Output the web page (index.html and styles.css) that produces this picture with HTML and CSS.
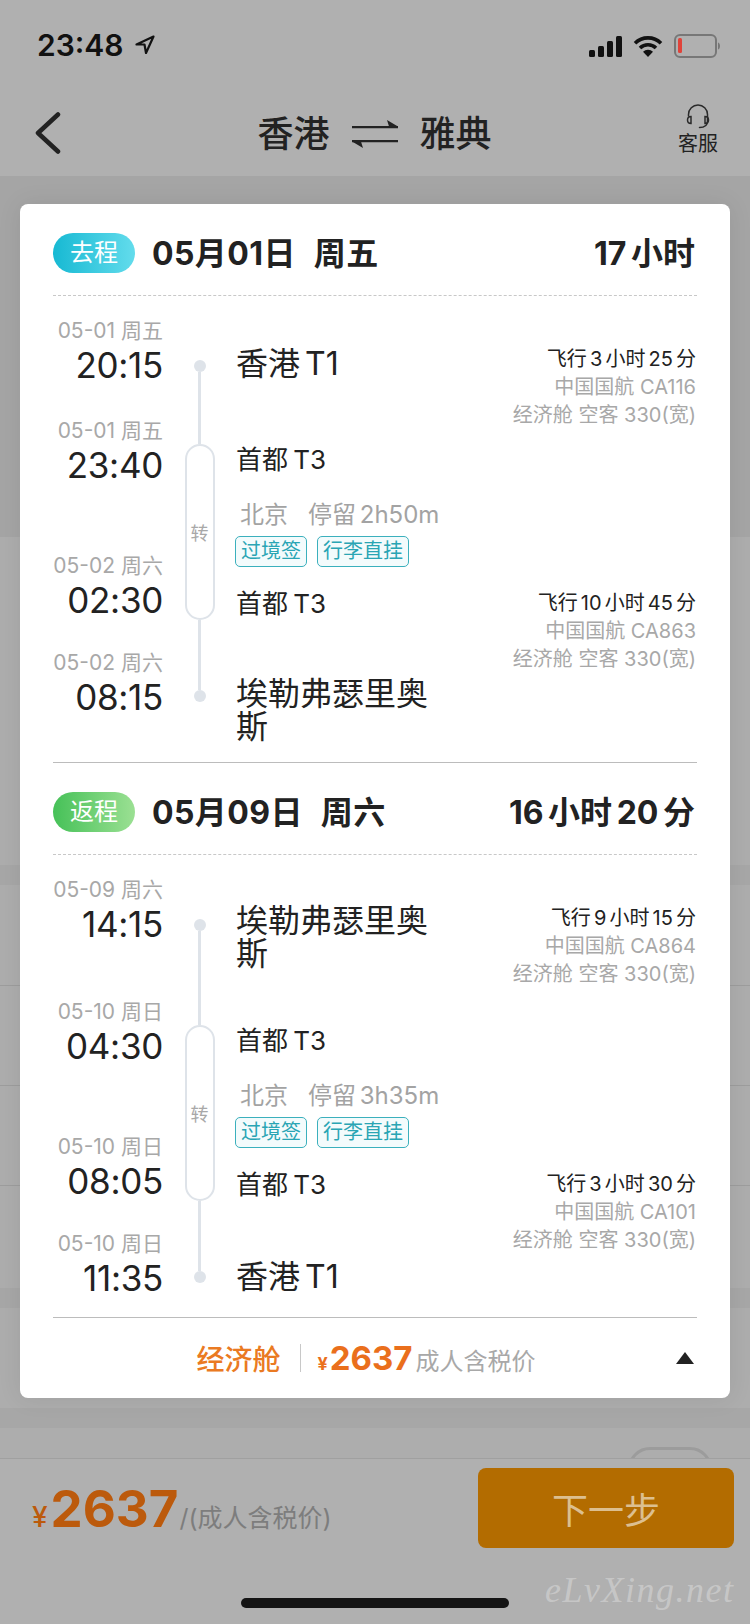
FILE: index.html
```html
<!DOCTYPE html>
<html>
<head>
    <meta charset="UTF-8">
    <title>香港 - 雅典</title>
    <link rel="stylesheet" href="styles.css">
</head>
<body>
    <header class="top-bar">
        <div class="status-bar">
            <div class="status-time">
                23:48
                <svg width="20" height="20" viewBox="0 0 20 20"><path d="M18.5 1.5 1.5 9.5h8l1.500 8.500z" fill="none" stroke="#111" stroke-width="2.200" stroke-linejoin="round"/></svg>
            </div>
            <div class="status-icons">
                <svg width="33" height="21" viewBox="0 0 33 21"><g fill="#111"><rect x="0" y="14" width="6" height="7" rx="1.5"/><rect x="9" y="10" width="6" height="11" rx="1.5"/><rect x="18" y="5" width="6" height="16" rx="1.5"/><rect x="27" y="0" width="6" height="21" rx="1.5"/></g></svg>
                <svg width="30" height="22" viewBox="0 0 30 22"><g fill="none" stroke="#111" stroke-width="3.6"><path d="M2 8.200a18.600 18.600 0 0 1 26 0"/><path d="M7 13a11.500 11.500 0 0 1 16 0"/></g><path d="M15 22l-5-5.200a7 7 0 0 1 10 0z" fill="#111"/></svg>
                <svg class="battery" width="46" height="24" viewBox="0 0 46 24"><rect x="1" y="1" width="41" height="22" rx="5" fill="none" stroke="#777" stroke-width="2"/><rect x="4" y="4" width="4" height="15" rx="1.500" fill="#e0433a"/><path d="M44 8.500c1.500.5 2 2 2 3.500s-.5 3-2 3.500z" fill="#777"/></svg>
            </div>
        </div>
        <nav class="nav-bar">
            <svg class="back-icon" width="26" height="42" viewBox="0 0 26 42"><path d="M23 2.500 3 21l20 18.500" fill="none" stroke="#222" stroke-width="4.500" stroke-linecap="round" stroke-linejoin="round"/></svg>
            <div class="nav-title">
                <span>香港</span>
                <svg width="46" height="28" viewBox="0 0 46 28"><g fill="#222"><path d="M0 6h46v2.200H0z"/><path d="M46 6.500 35 0l2 6.500z"/><path d="M0 20h46v2.200H0z"/><path d="M0 21.500 11 28l-2-6.500z"/></g></svg>
                <span>雅典</span>
            </div>
            <div class="nav-service">
                <svg width="26" height="27" viewBox="0 0 26 27"><g fill="none" stroke="#2a2a2a" stroke-width="1.500" stroke-linecap="round"><path d="M3.500 12V10.500a9.500 9.500 0 0 1 19 0V17c0 4-3 6.500-8 6.500"/><path d="M6 12.500c-2.500 0-3.500 1.500-3.500 3.500s1 3.500 3.500 3.500z"/><path d="M20 12.500c2.500 0 3.500 1.500 3.500 3.500s-1 3.500-3.500 3.500z"/></g></svg>
                <span>客服</span>
            </div>
        </nav>
    </header>

    <main class="content">
        <!-- page behind the sheet -->
        <div class="backdrop">
            <div class="bg-block bg-hero"></div>
            <div class="bg-block bg-first"></div>
            <div class="bg-gap"></div>
            <div class="bg-block bg-list">
                <div class="bg-row"></div>
                <div class="bg-row"></div>
                <div class="bg-row"></div>
            </div>
            <div class="bg-gap"></div>
            <div class="bg-block bg-short"></div>
            <div class="bg-gap"></div>
            <div class="bg-block bg-switch-row"><div class="bg-switch"></div></div>
        </div>

        <section class="sheet">
            <div class="leg">
                <div class="leg-head">
                    <span class="leg-badge badge-out">去程</span>
                    <span class="leg-date">05月01日&nbsp;&nbsp;周五</span>
                    <span class="leg-total">17 小时</span>
                </div>
                <div class="route route-short">
                    <div class="stop-time">
                        <div class="date-label">05-01 周五</div>
                        <div class="clock">20:15</div>
                    </div>
                    <div class="rail rail-start"><i class="rail-dot"></i><i class="rail-line"></i></div>
                    <div class="stop-name stop-name-single">香港 T1</div>
                    <div class="flight-info">
                        <div class="flight-time">飞行 3 小时 25 分</div>
                        <div>中国国航 CA116</div>
                        <div>经济舱 空客 330(宽)</div>
                    </div>

                    <div class="mid-times">
                        <div class="stop-time">
                            <div class="date-label">05-01 周五</div>
                            <div class="clock">23:40</div>
                        </div>
                        <div class="stop-time">
                            <div class="date-label">05-02 周六</div>
                            <div class="clock">02:30</div>
                        </div>
                    </div>
                    <div class="rail rail-mid">
                        <i class="rail-line stub-top"></i>
                        <div class="transfer-pill">转</div>
                        <i class="rail-line stub-bottom"></i>
                    </div>
                    <div class="mid-stops">
                        <div class="terminal">首都 T3</div>
                        <div class="layover"><span>北京</span><span>停留 2h50m</span></div>
                        <div class="tags"><span class="tag">过境签</span><span class="tag">行李直挂</span></div>
                        <div class="terminal terminal-next">首都 T3</div>
                    </div>
                    <div class="flight-info flight-info-next">
                        <div class="flight-time">飞行 10 小时 45 分</div>
                        <div>中国国航 CA863</div>
                        <div>经济舱 空客 330(宽)</div>
                    </div>

                    <div class="stop-time">
                        <div class="date-label">05-02 周六</div>
                        <div class="clock">08:15</div>
                    </div>
                    <div class="rail rail-end"><i class="rail-line stub-end"></i><i class="rail-dot"></i></div>
                    <div class="stop-name">埃勒弗瑟里奥斯</div>
                </div>
            </div>

            <div class="leg">
                <div class="leg-head">
                    <span class="leg-badge badge-back">返程</span>
                    <span class="leg-date">05月09日&nbsp;&nbsp;周六</span>
                    <span class="leg-total">16 小时 20 分</span>
                </div>
                <div class="route route-tall">
                    <div class="stop-time">
                        <div class="date-label">05-09 周六</div>
                        <div class="clock">14:15</div>
                    </div>
                    <div class="rail rail-start"><i class="rail-dot"></i><i class="rail-line"></i></div>
                    <div class="stop-name">埃勒弗瑟里奥斯</div>
                    <div class="flight-info">
                        <div class="flight-time">飞行 9 小时 15 分</div>
                        <div>中国国航 CA864</div>
                        <div>经济舱 空客 330(宽)</div>
                    </div>

                    <div class="mid-times">
                        <div class="stop-time">
                            <div class="date-label">05-10 周日</div>
                            <div class="clock">04:30</div>
                        </div>
                        <div class="stop-time">
                            <div class="date-label">05-10 周日</div>
                            <div class="clock">08:05</div>
                        </div>
                    </div>
                    <div class="rail rail-mid">
                        <i class="rail-line stub-top"></i>
                        <div class="transfer-pill">转</div>
                        <i class="rail-line stub-bottom"></i>
                    </div>
                    <div class="mid-stops">
                        <div class="terminal">首都 T3</div>
                        <div class="layover"><span>北京</span><span>停留 3h35m</span></div>
                        <div class="tags"><span class="tag">过境签</span><span class="tag">行李直挂</span></div>
                        <div class="terminal terminal-next">首都 T3</div>
                    </div>
                    <div class="flight-info flight-info-next">
                        <div class="flight-time">飞行 3 小时 30 分</div>
                        <div>中国国航 CA101</div>
                        <div>经济舱 空客 330(宽)</div>
                    </div>

                    <div class="stop-time">
                        <div class="date-label">05-10 周日</div>
                        <div class="clock">11:35</div>
                    </div>
                    <div class="rail rail-end"><i class="rail-line stub-end"></i><i class="rail-dot"></i></div>
                    <div class="stop-name stop-name-single">香港 T1</div>
                </div>
            </div>

            <div class="sheet-foot">
                <div class="foot-price">
                    <span class="foot-cabin">经济舱</span>
                    <i class="foot-sep"></i>
                    <span class="foot-yen">¥</span><span class="foot-amount">2637</span><span class="foot-note">成人含税价</span>
                </div>
                <i class="foot-arrow"></i>
            </div>
        </section>
    </main>

    <footer class="bottom-bar">
        <div class="buy-row">
            <div class="total">
                <span class="total-yen">¥</span><span class="total-amount">2637</span><span class="total-note">/(成人含税价)</span>
            </div>
            <button class="next-btn">下一步</button>
        </div>
        <div class="home-bar"></div>
        <div class="watermark">eLvXing.net</div>
    </footer>
</body>
</html>
```

FILE: styles.css
```css
/* Base styles */
* {
    box-sizing: border-box;
}

body {
    margin: 0;
    width: 750px;
    height: 1624px;
    overflow: hidden;
    display: flex;
    flex-direction: column;
    background: #b0b0b0;
    font-family: Inter, "Noto Sans CJK SC", sans-serif;
    color: #222;
}

i {
    display: block;
}

/* Status bar and nav */
.top-bar {
    height: 176px;
    background: #b0b0b0;
}

.status-bar {
    height: 90px;
    padding: 30px 30px 0 37px;
    display: flex;
    justify-content: space-between;
    align-items: flex-start;
}

.status-time {
    display: flex;
    align-items: center;
    gap: 11px;
    font-size: 30px;
    font-weight: 600;
    line-height: 30px;
    color: #111;
}

.status-icons {
    display: flex;
    align-items: center;
    gap: 11px;
    margin-top: 4px;
}

.nav-bar {
    height: 86px;
    padding: 0 32px 0 35px;
    display: flex;
    align-items: flex-start;
    position: relative;
}

.back-icon {
    margin-top: 22px;
}

.nav-title {
    flex: 1;
    display: flex;
    justify-content: center;
    align-items: center;
    gap: 22px;
    margin-top: 19px;
    padding-left: 10px;
    font-size: 36px;
    font-weight: 500;
    line-height: 50px;
}

.nav-service {
    display: flex;
    flex-direction: column;
    align-items: center;
    margin-top: 14px;
    font-size: 20px;
    line-height: 26px;
}

/* Page behind the sheet */
.content {
    height: 1282px;
    position: relative;
}

.bg-block {
    background: #adadad;
}

.bg-gap {
    height: 20px;
    background: #a7a7a7;
}

.bg-hero {
    height: 361px;
    background: #a5a5a5;
}

.bg-first {
    height: 328px;
}

.bg-list {
    height: 403px;
    padding-top: 100px;
}

.bg-row {
    height: 100px;
    border-top: 1px solid #9d9d9d;
}

.bg-short {
    height: 100px;
}

.bg-switch-row {
    height: 30px;
    padding: 19px 38px 0 0;
    display: flex;
    justify-content: flex-end;
    overflow: hidden;
}

.bg-switch {
    width: 84px;
    height: 44px;
    border: 3px solid #9c9c9c;
    border-radius: 22px;
    flex-shrink: 0;
}

/* Sheet */
.sheet {
    position: absolute;
    top: 28px;
    left: 20px;
    width: 710px;
    padding: 0 33px;
    background: white;
    border-radius: 8px;
    box-shadow: 0 0 24px rgba(0,0,0,0.08);
}

.leg {
    border-bottom: 1px solid #bcbcbc;
}

.leg-head {
    margin-top: 29px;
    padding-bottom: 22px;
    display: flex;
    align-items: center;
    border-bottom: 1px dashed #c8c8c8;
    box-sizing: content-box;
    height: 40px;
}

.leg-badge {
    width: 82px;
    height: 40px;
    border-radius: 20px;
    color: white;
    font-size: 24px;
    line-height: 40px;
    text-align: center;
}

.badge-out {
    background: linear-gradient(90deg, #17b9d3, #63dcec);
}

.badge-back {
    background: linear-gradient(90deg, #46c158, #9be093);
}

.leg-date {
    margin-left: 17px;
    padding-bottom: 4px;
    flex: 1;
    font-size: 32px;
    font-weight: 700;
    letter-spacing: 0.4px;
    word-spacing: 1px;
}

.leg-total {
    padding: 0 2px 4px 0;
    font-size: 32px;
    font-weight: 700;
    word-spacing: -3px;
}

/* Route grid: time | rail | stop | flight */
.route {
    padding: 23px 0 19px;
    display: grid;
    grid-template-columns: 110px 73px 210px 1fr;
}

.route-short {
    grid-template-rows: 100px 232px auto;
}

.route-tall {
    grid-template-rows: 122px 232px auto;
}

.stop-time {
    height: 66px;
    text-align: right;
}

.date-label {
    font-size: 21px;
    line-height: 24px;
    color: #a8a8a8;
    white-space: nowrap;
}

.clock {
    padding-top: 1px;
    font-size: 35px;
    letter-spacing: -0.3px;
    line-height: 42px;
    color: #222;
}

.mid-times {
    display: flex;
    flex-direction: column;
    gap: 69px;
}

.rail {
    display: flex;
    flex-direction: column;
    align-items: center;
}

.rail-start {
    padding-top: 41px;
}

.rail-dot {
    width: 12px;
    height: 12px;
    border-radius: 50%;
    background: #dee3e9;
    flex-shrink: 0;
}

.rail-line {
    width: 3px;
    flex: 1;
    background: #dee3e9;
}

.stub-top {
    flex: 0 0 25px;
}

.stub-bottom {
    flex: 0 0 31px;
}

.stub-end {
    flex: 0 0 39px;
}

.transfer-pill {
    width: 30px;
    flex: 1;
    display: flex;
    align-items: center;
    justify-content: center;
    border: 2px solid #dee3e9;
    border-radius: 15px;
    font-size: 18px;
    color: #a8a8a8;
}

.stop-name {
    padding-top: 26px;
    font-size: 32px;
    line-height: 33px;
    word-spacing: -4px;
    color: #222;
}

.stop-name-single {
    padding-top: 28px;
}

.terminal {
    margin-top: 26px;
    font-size: 26px;
    line-height: 30px;
    word-spacing: -2px;
}

.terminal-next {
    margin-top: 22px;
}

.layover {
    margin-top: 25px;
    padding-left: 4px;
    display: flex;
    gap: 20px;
    font-size: 24px;
    line-height: 30px;
    color: #a3a3a3;
    word-spacing: -3px;
    white-space: nowrap;
}

.tags {
    margin-top: 6px;
    margin-left: -1px;
    display: flex;
    gap: 10px;
}

.tag {
    height: 31px;
    padding: 0 5px;
    border: 1px solid #3bb0bd;
    border-radius: 5px;
    background: #f3fbfc;
    color: #2aa5b4;
    font-size: 20px;
    line-height: 28px;
    white-space: nowrap;
}

.flight-info {
    padding: 26px 1px 0 0;
    text-align: right;
    font-size: 20px;
    line-height: 28px;
    color: #a8a8a8;
    white-space: nowrap;
}

.flight-info-next {
    padding-top: 170px;
}

.flight-time {
    color: #222;
    word-spacing: -2.5px;
}

/* Sheet footer */
.sheet-foot {
    height: 80px;
    display: flex;
    align-items: center;
}

.foot-price {
    flex: 1;
    padding-left: 3px;
    display: flex;
    justify-content: center;
    align-items: baseline;
}

.foot-cabin {
    font-size: 28px;
    font-weight: 500;
    color: #ea7a22;
}

.foot-sep {
    width: 1px;
    height: 28px;
    margin: 0 17px 0 19px;
    background: #c8c8c8;
    align-self: center;
}

.foot-yen {
    font-size: 18px;
    font-weight: 700;
    color: #ea6f1c;
}

.foot-amount {
    margin-left: 2px;
    font-size: 33px;
    font-weight: 700;
    color: #ea6f1c;
}

.foot-note {
    margin-left: 3px;
    font-size: 24px;
    color: #a8a8a8;
}

.foot-arrow {
    margin-right: 3px;
    width: 0;
    height: 0;
    border-left: 9px solid transparent;
    border-right: 9px solid transparent;
    border-bottom: 12px solid #222;
}

/* Bottom bar */
.bottom-bar {
    flex: 1;
    position: relative;
    padding-top: 9px;
    background: #b0b0b0;
    border-top: 1px solid #a0a0a0;
}

.buy-row {
    padding: 0 16px 0 32px;
    display: flex;
    justify-content: space-between;
    align-items: center;
}

.total {
    display: flex;
    align-items: baseline;
}

.total-yen {
    font-size: 28px;
    font-weight: 500;
    color: #bc5a0c;
}

.total-amount {
    margin-left: 3px;
    font-size: 51px;
    font-weight: 700;
    color: #bc5a0c;
}

.total-note {
    margin-left: 1px;
    font-size: 25px;
    color: #7d7d7d;
}

.next-btn {
    width: 256px;
    height: 80px;
    border: none;
    border-radius: 8px;
    background: #b36c00;
    color: #dcbf90;
    font-family: inherit;
    font-size: 36px;
}

.home-bar {
    width: 268px;
    height: 10px;
    margin: 50px auto 0;
    border-radius: 5px;
    background: #141414;
}

.watermark {
    position: absolute;
    top: 110px;
    left: 545px;
    font-family: "Liberation Serif", serif;
    font-style: italic;
    font-size: 36px;
    letter-spacing: 1.5px;
    color: rgba(255,255,255,0.3);
    white-space: nowrap;
}
```
